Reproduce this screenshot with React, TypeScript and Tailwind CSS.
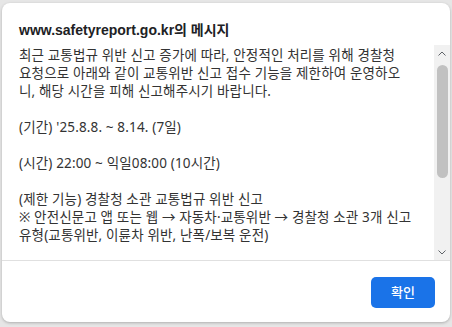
const lines: string[] = [
  "최근 교통법규 위반 신고 증가에 따라, 안정적인 처리를 위해 경찰청",
  "요청으로 아래와 같이 교통위반 신고 접수 기능을 제한하여 운영하오",
  "니, 해당 시간을 피해 신고해주시기 바랍니다.",
  "",
  "(기간) '25.8.8. ~ 8.14. (7일)",
  "",
  "(시간) 22:00 ~ 익일08:00 (10시간)",
  "",
  "(제한 기능) 경찰청 소관 교통법규 위반 신고",
  "※ 안전신문고 앱 또는 웹 → 자동차·교통위반 → 경찰청 소관 3개 신고",
  "유형(교통위반, 이륜차 위반, 난폭/보복 운전)",
  "",
];

function Chevron({ up }: { up?: boolean }) {
  return (
    <svg width="8" height="5" viewBox="0 0 8 5" className="shrink-0">
      <path
        d={up ? "M0.5 4.5 L4 1 L7.5 4.5" : "M0.5 0.5 L4 4 L7.5 0.5"}
        fill="none"
        stroke="#5f6368"
        strokeWidth="1"
      />
    </svg>
  );
}

// ─── Fake scrollbar (track + thumb) ───────────────────────────────────────────

function ScrollBar() {
  return (
    <div className="w-[16px] shrink-0 bg-[#f1f1f1] flex flex-col items-center pt-[6px] pb-[5px]">
      <Chevron up />
      <div className="w-[11px] h-[113px] mt-[9px] rounded-full bg-[#c1c1c1]" />
      <div className="flex-1" />
      <Chevron />
    </div>
  );
}

export default function App() {
  return (
    <div
      className="w-[452px] h-[327px] bg-[#e6e6e6] pt-[3px] pl-[2px] pr-[2px] pb-[5px]"
      style={{ fontFamily: "'Noto Sans', 'Noto Sans CJK KR', sans-serif" }}
    >
      <div className="h-full flex flex-col bg-white rounded-[8px] shadow-[0_1px_3px_rgba(0,0,0,0.25)] overflow-hidden">
        {/* Title */}
        <div className="pt-[14px] pl-[17px] h-[42px] shrink-0">
          <span
            className="text-[14px] leading-[20px] font-bold text-[#202124] whitespace-nowrap"
            style={{ fontFamily: "'Liberation Sans', 'Noto Sans CJK KR', sans-serif" }}
          >
            www.safetyreport.go.kr의 메시지
          </span>
        </div>

        {/* Message body */}
        <div className="flex h-[215px] shrink-0">
          <div className="flex-1 overflow-hidden pl-[17px] pt-[1px]">
            {lines.map((l, i) => (
              <div key={i} className="h-[18px] text-[13.5px] tracking-[0.15px] leading-[18px] text-[#333333] whitespace-nowrap">
                {l}
              </div>
            ))}
          </div>
          <ScrollBar />
        </div>

        {/* Footer */}
        <div className="flex-1 border-t border-[#e0e0e0] flex justify-end items-start pt-[16px] pr-[15px]">
          <button className="w-[64px] h-[31px] rounded-[5px] bg-[#1a73e8] text-white text-[13px] font-medium">
            확인
          </button>
        </div>
      </div>
    </div>
  );
}
